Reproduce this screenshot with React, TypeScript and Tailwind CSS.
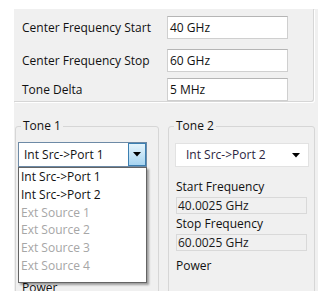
const FONT = { fontFamily: '"Open Sans", "Noto Sans", sans-serif' };

const ROWS = [
  { label: "Center Frequency Start", value: "40 GHz", mt: "mt-[7px]" },
  { label: "Center Frequency Stop", value: "60 GHz", mt: "mt-[10px]" },
  { label: "Tone Delta", value: "5 MHz", mt: "mt-[6px]" },
];

const OPTIONS = [
  { text: "Int Src->Port 1", enabled: true },
  { text: "Int Src->Port 2", enabled: true },
  { text: "Ext Source 1", enabled: false },
  { text: "Ext Source 2", enabled: false },
  { text: "Ext Source 3", enabled: false },
  { text: "Ext Source 4", enabled: false },
];

const Arrow = () => (
  <svg width="8" height="5" viewBox="0 0 8 5">
    <path d="M0 0 H8 L4 4.5 Z" fill="#000" />
  </svg>
);

const ReadOnlyField = ({ value }: { value: string }) => (
  <div className="flex h-[17px] w-[131px] items-center border border-[#d9d9d9] bg-[#f0f0f0] px-[1px] text-[12px] leading-none text-[#1a1a1a]">
    {value}
  </div>
);

export default function App() {
  return (
    <div className="h-[305px] w-[327px] bg-white pl-[14px] pt-[9px]" style={FONT}>
      <div className="flex h-[282px] w-[304px] flex-col overflow-hidden bg-[#f0f0f0] text-[12px] text-[#111]">
        {/* top group */}
        <div className="flex h-[97px] w-[300px] flex-col rounded-br-[3px] border-r border-b border-[#d6d6d6] shadow-[1px_1px_0_#fff]">
          {ROWS.map((r) => (
            <div key={r.label} className={`flex h-[23px] items-center ${r.mt}`}>
              <span className="w-[153px] pl-[8px]">{r.label}</span>
              <div className="flex h-[23px] w-[121px] items-center border border-[#cfcfcf] border-t-[#b5b5b5] bg-white px-[2px]">
                {r.value}
              </div>
            </div>
          ))}
        </div>

        {/* tone groups */}
        <div className="mt-[24px] flex gap-[9px] pl-[1px]">
          {/* Tone 1 */}
          <div className="relative h-[200px] w-[144px] rounded-[3px] border border-[#d6d6d6]">
            <span className="absolute -top-[9px] left-[5px] bg-[#f0f0f0] px-[2px] leading-[16px]">Tone 1</span>
            <div className="relative ml-[2px] mt-[15px] w-[129px]">
              <div className="flex h-[25px] items-center border border-[#6d8aa6] bg-white">
                <span className="flex-1 pl-[5px]">Int Src-&gt;Port 1</span>
                <div className="flex h-[23px] w-[18px] items-center justify-center border border-[#3c7fb1] bg-gradient-to-b from-[#e5f4fc] to-[#a7d4f0]">
                  <Arrow />
                </div>
              </div>
              <div className="absolute left-0 top-[25px] z-10 w-[129px] border border-[#646464] bg-white pb-[7px] shadow-[2px_2px_2px_rgba(0,0,0,0.35)]">
                {OPTIONS.map((o) => (
                  <div
                    key={o.text}
                    className={`flex h-[17.8px] items-center pl-[2px] ${o.enabled ? "text-[#111]" : "text-[#a6a6a6]"}`}
                  >
                    {o.text}
                  </div>
                ))}
              </div>
            </div>
            <div className="ml-[6px] mt-[114px] leading-[14px]">Power</div>
          </div>

          {/* Tone 2 */}
          <div className="relative h-[200px] w-[147px] rounded-[3px] border border-[#d6d6d6]">
            <span className="absolute -top-[9px] left-[5px] bg-[#f0f0f0] px-[2px] leading-[16px]">Tone 2</span>
            <div className="ml-[6px] mt-[16px] flex h-[24px] w-[134px] items-center border border-[#e2e2e2] bg-white pl-[10px] pr-[8px] text-[#2a2440]">
              <span className="flex-1">Int Src-&gt;Port 2</span>
              <Arrow />
            </div>
            <div className="ml-[7px] mt-[12px] flex flex-col">
              <span className="leading-[16px]">Start Frequency</span>
              <div className="mt-[2px]">
                <ReadOnlyField value="40.0025 GHz" />
              </div>
              <span className="mt-[2px] leading-[16px]">Stop Frequency</span>
              <div className="mt-[2px]">
                <ReadOnlyField value="60.0025 GHz" />
              </div>
              <span className="mt-[7px] leading-[16px]">Power</span>
            </div>
          </div>
        </div>
      </div>
    </div>
  );
}
